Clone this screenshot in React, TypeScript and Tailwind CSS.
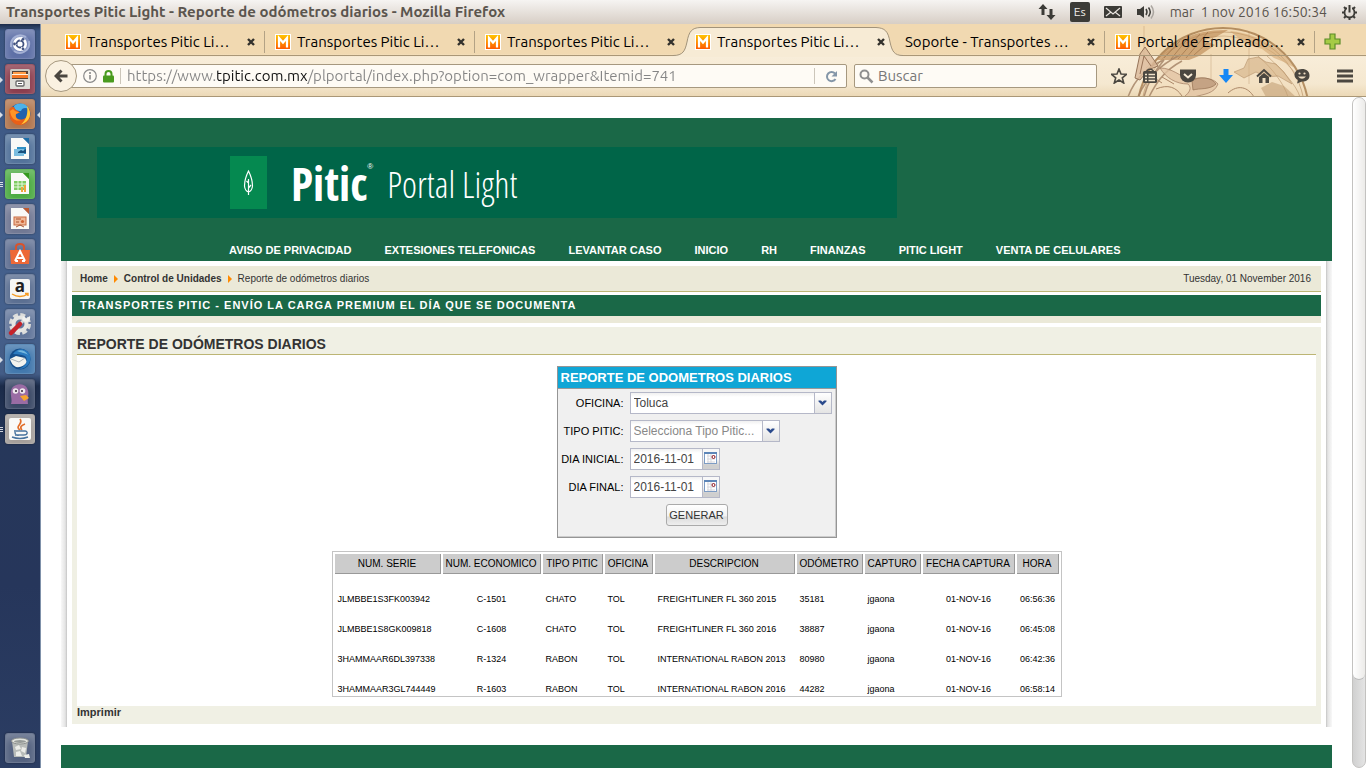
import React from "react";

const uiFont = "font-['Ubuntu','Open_Sans',sans-serif]";

function Favicon() {
  return (
    <svg width="16" height="16" viewBox="0 0 16 16" className="shrink-0" aria-hidden="true">
      <defs>
        <linearGradient id="fav" x1="0" y1="0" x2="0" y2="1">
          <stop offset="0" stopColor="#ffc400" />
          <stop offset="1" stopColor="#ff5a00" />
        </linearGradient>
      </defs>
      <rect width="16" height="16" fill="#fff" />
      <rect x="1" y="1" width="14" height="14" fill="url(#fav)" />
      <path d="M4 13.500V4L8 8.500L12 4V13.500" fill="none" stroke="#fff" strokeWidth="2.200" />
    </svg>
  );
}

function CloseMark() {
  return (
    <svg width="8" height="8" viewBox="0 0 8 8" aria-hidden="true">
      <path d="M1 1L7 7M7 1L1 7" stroke="#33312c" strokeWidth="2.4" />
    </svg>
  );
}

type TabInfo = { title: string; icon: boolean; active?: boolean; divider?: boolean };

const tabs: TabInfo[] = [
  { title: "Transportes Pitic Li…", icon: true, divider: true },
  { title: "Transportes Pitic Li…", icon: true, divider: true },
  { title: "Transportes Pitic Li…", icon: true },
  { title: "Transportes Pitic Li…", icon: true, active: true },
  { title: "Soporte - Transportes …", icon: false, divider: true },
  { title: "Portal de Empleado…", icon: true, divider: true },
];

function Tab({ tab }: { tab: TabInfo }) {
  return (
    <div className="relative flex h-8 w-[210px] items-center pb-1 pl-[10px] pr-[10px] pt-2">
      {tab.active && (
        <svg className="absolute -left-3 top-0 z-0" width="230" height="33" viewBox="0 0 230 33" aria-hidden="true">
          <path
            d="M0 33V31.500C10 31.500 12 27 14 18C16 7 19 4 27 3.500H203C212 4 215 7 217 18C219 27 221 31.500 230 31.500V33Z"
            fill="#f7ebd5"
          />
          <path
            d="M0 31.500C10 31.500 12 27 14 18C16 7 19 4 27 3.500H203C212 4 215 7 217 18C219 27 221 31.500 230 31.500"
            fill="none"
            stroke="#a2937a"
          />
        </svg>
      )}
      <button type="button" className="relative z-10 flex min-w-0 flex-1 items-center gap-[6px] text-left">
        {tab.icon && <Favicon />}
        <span className="whitespace-nowrap text-[15px] leading-5 text-black">{tab.title}</span>
      </button>
      <button type="button" aria-label="Cerrar pestaña" className="relative z-10 flex h-4 w-2 items-center">
        <CloseMark />
      </button>
      {tab.divider && <span className="absolute right-0 top-[7px] h-[22px] w-px bg-[#b3a285]" />}
    </div>
  );
}

function PersonaArt() {
  return (
    <svg className="pointer-events-none absolute right-[40px] top-0" width="210" height="73" viewBox="0 0 210 73" aria-hidden="true">
      <circle cx="107" cy="90" r="86" fill="#f1dab6" fillOpacity=".5" />
      <g fill="none" stroke="#a57a4b">
        <circle cx="107" cy="90" r="86" strokeWidth="2" strokeOpacity=".8" />
        <circle cx="107" cy="90" r="82" strokeOpacity=".5" />
        <path d="M28 2V34M133 8V60M95 30V60" strokeOpacity=".3" />
        <path d="M30 44C52 24 76 13 108 12C138 14 162 28 180 50" strokeOpacity=".35" />
        <path d="M150 31C165 45 180 60 184 73M142 32C157 45 168 60 172 73" strokeOpacity=".45" />
      </g>
      <path d="M41 36C56 16 82 5 112 6L100 13L88 16L99 21L83 32L73 36L60 36Z" fill="#bd8b56" fillOpacity=".65" />
      <g stroke="#8b6037" strokeOpacity=".5">
        <path d="M48 34L64 17M55 35L73 13M62 35L84 10M70 34L92 8M78 31L97 14" />
      </g>
      <path d="M114 7C144 10 166 25 179 44L168 38L158 34L146 25L130 20Z" fill="#ce9d66" fillOpacity=".5" />
      <path d="M118 48L128 44L132 35L142 33L150 38L160 40L168 48L176 60L162 52L150 53L140 48L128 54Z" fill="#d0ac7e" fillOpacity=".55" stroke="#ad8760" strokeOpacity=".5" />
      <path d="M145 64L156 58L168 62L180 73H150Z" fill="#c3a077" fillOpacity=".6" />
      <path d="M12 73C18 57 30 43 48 36C37 49 31 60 28 73M22 73C29 56 42 42 64 31M33 73C39 61 47 47 66 37" fill="none" stroke="#a18063" strokeOpacity=".8" strokeWidth="1.500" />
      <path d="M19 54L24 30L29 23L38 36L42 42L32 46L24 56Z" fill="#dbb99a" fillOpacity=".8" stroke="#957358" />
      <path d="M24 50L28 32L35 42" fill="none" stroke="#997358" />
      <path d="M44 44C56 44 64 52 74 56C84 52 98 54 102 60C98 70 88 70 78 73H68C74 68 76 64 72 60C60 60 50 54 44 44Z" fill="#e2c4a4" fillOpacity=".8" stroke="#9f7a5f" strokeOpacity=".7" />
      <path d="M76 57C82 52 96 53 100 60C94 66 84 64 77 66Z" fill="#c5a384" stroke="#947052" strokeOpacity=".7" />
      <path d="M40 65C52 60 60 63 66 72M46 53L58 60M34 51L46 59M112 69C122 60 132 63 138 73" fill="none" stroke="#ab8768" />
    </svg>
  );
}

function LauncherTile({ label, tone, windows = 0, focused, children }: {
  label: string;
  tone: string;
  windows?: number;
  focused?: boolean;
  children: React.ReactNode;
}) {
  return (
    <button
      type="button"
      aria-label={label}
      className={`relative flex h-[30px] w-[30px] items-center justify-center rounded-[3px] border border-white/15 shadow-[0_0_2px_rgba(0,0,0,0.45),inset_0_5px_8px_rgba(255,255,255,0.25)] ${tone}`}
    >
      <svg width="24" height="24" viewBox="0 0 24 24" className="overflow-visible" aria-hidden="true">{children}</svg>
      {windows === 1 && <span className="absolute -left-1.5 top-3 h-0 w-0 border-y-[3px] border-l-[3px] border-y-transparent border-l-white/80" />}
      {windows > 1 && (
        <span className="absolute -left-1.5 top-3 flex flex-col gap-px">
          {Array.from({ length: windows }, (_, i) => <span key={i} className="h-px w-[3px] bg-white/80" />)}
        </span>
      )}
      {focused && <span className="absolute -right-1.5 top-3 h-0 w-0 border-y-[3px] border-r-[3px] border-y-transparent border-r-white/80" />}
    </button>
  );
}

function DocShape({ accent, children }: { accent: string; children: React.ReactNode }) {
  return (
    <>
      <path d="M3 1H15L21 7V22H3Z" fill="#f9f9f7" />
      <path d="M15 1H21V7Z" fill={accent} />
      {children}
    </>
  );
}

function Launcher() {
  return (
    <nav
      aria-label="Lanzador"
      className="flex w-[41px] shrink-0 flex-col items-start gap-[5px] border-r border-[#7f91aa] bg-[linear-gradient(180deg,#1d2c49_0px,#3c5682_7px,#45618d_280px,#435c86_350px,#1b2b49_362px,#26375a_420px,#26365b_560px,#2b3d63_744px)] px-[5px] py-[5px]"
    >
      <LauncherTile label="Inicio" tone="bg-[#5d6fa6]">
        <circle cx="12" cy="12" r="10" fill="#9aa8cf" fillOpacity=".5" />
        <path d="M3 15C2 6 10 1 18 5M21 9C23 18 13 24 6 19" fill="none" stroke="#c0cae5" strokeWidth="2" strokeOpacity=".6" />
        <circle cx="12" cy="12" r="7" fill="#fff" />
        <circle cx="12" cy="12" r="3.500" fill="none" stroke="#41527f" strokeWidth="1.800" />
        <path d="M12 8.500L14 5M8.500 12.500H5M13.500 15L15 18.500" stroke="#fff" strokeWidth="1.200" />
        <circle cx="6.500" cy="12" r="1.400" fill="#41527f" /><circle cx="15" cy="7.300" r="1.400" fill="#41527f" /><circle cx="15" cy="16.800" r="1.400" fill="#41527f" />
      </LauncherTile>
      <LauncherTile label="Archivos" tone="bg-[#8b3c4d]" windows={1}>
        <rect x="2" y="2" width="20" height="20" rx="1.500" fill="#c9c8c2" />
        <rect x="4" y="4" width="16" height="8" fill="#5a4436" />
        <path d="M5 5H18V7H5Z" fill="#ff9c48" /><path d="M4 8H20V11H4Z" fill="#f47725" />
        <path d="M4 7.500H20" stroke="#fff3df" />
        <rect x="2" y="12" width="20" height="10" rx="1" fill="#dddcd6" />
        <rect x="8" y="14" width="8" height="5" rx="1" fill="#fff" stroke="#666" strokeWidth="1.300" /><path d="M10 16.500H14" stroke="#555" />
      </LauncherTile>
      <LauncherTile label="Firefox" tone="bg-[#b0744c]" windows={1} focused>
        <circle cx="12" cy="12" r="10.500" fill="#1f62ae" />
        <path d="M6 4C11 0 18 1 21 7C17 5 14 6 13 9C9 9 6 8 6 4Z" fill="#4db2ea" />
        <path d="M1.500 7C0 17 5 23 12 23C21 23 25 13 20 5C21 12 19 17 14 17.500C9 18 6 14 8 12L12 10.500C9 8 7 8 6 5C4 5 2.500 5.500 1.500 7Z" fill="#ea5f17" />
        <path d="M19 4C25 11 22 20 13 22.500C19 17 20 11 19 4Z" fill="#ffc738" />
        <path d="M2 9L5 7L7 9L11 10.500L8 12C7 15 9 18 13 18C8 20 3 17 2 9Z" fill="#ff9426" />
      </LauncherTile>
      <LauncherTile label="Writer" tone="bg-[#52729a]">
        <DocShape accent="#1c6da7">
          <rect x="9" y="10" width="9" height="7" fill="#2e8fc4" /><rect x="6" y="12" width="10" height="7" fill="#7bbde0" />
          <path d="M10 15L13 13L15 14L18 12V16H10Z" fill="#174f7c" />
        </DocShape>
      </LauncherTile>
      <LauncherTile label="Calc" tone="bg-[#4cab42]" windows={3}>
        <DocShape accent="#35991e">
          <rect x="6" y="9" width="12" height="9" fill="#7dcc61" /><path d="M6 12H18M6 15H18M10 9V18M14 9V18" stroke="#e7f7df" />
          <path d="M13 20V15H15V20M16 20V13H18V20" fill="#f1a63b" />
        </DocShape>
      </LauncherTile>
      <LauncherTile label="Impress" tone="bg-[#707793]">
        <DocShape accent="#bd5a31">
          <rect x="6" y="10" width="12" height="8" fill="#efb99a" stroke="#c96a41" /><path d="M8 12H13M8 15H11M8 20L12 18L16 20" stroke="#a95531" fill="none" />
          <circle cx="14.500" cy="14.500" r="1.600" fill="#ce6436" />
        </DocShape>
      </LauncherTile>
      <LauncherTile label="Software" tone="bg-[#5e6e91]">
        <path d="M8 9V5Q8 2 12 2T16 5V9" fill="none" stroke="#d9532c" strokeWidth="2" />
        <path d="M2 8H22L21 22H3Z" fill="#ed6837" />
        <path d="M7 19L12 9L17 19M9 16H15M7 19H10M14 19H17" fill="none" stroke="#fff" strokeWidth="2" />
      </LauncherTile>
      <LauncherTile label="Amazon" tone="bg-[#5a6e91]">
        <rect x="2" y="2" width="20" height="20" rx="2" fill="#f6f6f4" />
        <text x="12" y="15" textAnchor="middle" fontSize="17" fontWeight="700" fill="#202020" className="font-['Open_Sans',sans-serif]">a</text>
        <path d="M4 17Q12 22 20 17M17 16.500H20V19" stroke="#f59a20" strokeWidth="1.400" fill="none" />
      </LauncherTile>
      <LauncherTile label="Configuración" tone="bg-[#61759a]">
        <circle cx="12" cy="12" r="8.500" fill="none" stroke="#dddddb" strokeWidth="5" strokeDasharray="4.500 2.180" />
        <circle cx="12" cy="12" r="6.500" fill="none" stroke="#e5e5e2" strokeWidth="4" />
        <path d="M10 14L17 7" stroke="#d5d7d8" strokeWidth="3" /><path d="M3 21L12 12" stroke="#c6232a" strokeWidth="4.500" strokeLinecap="round" />
        <path d="M16 4L18 7L22 4C23 9 19 11 15 9C14 7 14 5 16 4Z" fill="#f1f1ef" />
      </LauncherTile>
      <LauncherTile label="Thunderbird" tone="bg-[#4177ac]" windows={1}>
        <circle cx="12" cy="12" r="10.500" fill="#164e8a" />
        <path d="M2 12L8 9L17 11L19 15Q15 21 8 20Q3 17 2 12Z" fill="#f2f3ee" /><path d="M3 12L11 15L17 11" stroke="#a9b3ba" fill="none" />
        <path d="M5 7C9 0 19 1 22 8C24 16 18 22 11 22C18 19 20 14 18 10C15 7 10 8 5 7Z" fill="#2a7abf" />
        <path d="M9 4C13 2 18 4 20 8C16 5 13 6 9 4Z" fill="#75b8df" />
      </LauncherTile>
      <LauncherTile label="Pidgin" tone="bg-[#394765]">
        <path d="M3 22C5 18 1 11 4 6C8 1 16 1 19 6C22 11 19 16 20 22Z" fill="#9a6ca4" />
        <circle cx="7.500" cy="9" r="2.800" fill="#eee7ed" /><circle cx="14.500" cy="9" r="2.800" fill="#eee7ed" />
        <circle cx="8" cy="9" r="1" fill="#35273b" /><circle cx="14" cy="9" r="1" fill="#35273b" />
        <path d="M12 14L18 13L21 16L16 19Z" fill="#f6a52e" />
      </LauncherTile>
      <LauncherTile label="Java" tone="bg-[#a49e9a]" windows={3}>
        <rect x="1" y="1" width="22" height="22" rx="2" fill="#f9f9f7" />
        <path d="M12 13C6 9 16 7 12 2M14 13C11 10 14 8 17 7" fill="none" stroke="#e16d28" strokeWidth="1.700" />
        <path d="M6 14H17C20 14 20 18 16 18H7M7 15Q7 19 11 18M4 20Q12 23 20 20" fill="none" stroke="#47739e" strokeWidth="1.400" />
      </LauncherTile>
      <div className="flex-1" />
      <LauncherTile label="Papelera" tone="bg-[#53617f]">
        <path d="M4 5L6 21H18L20 5Z" fill="#b8bcb9" /><ellipse cx="12" cy="5" rx="8.500" ry="3" fill="#e3e5df" stroke="#8d918f" />
        <ellipse cx="12" cy="5.500" rx="6" ry="1.500" fill="#969b98" />
        <path d="M7 11L11 9L13 13L8 14ZM14 11L18 12L17 17L13 15ZM8 16L12 15L14 20H8ZM16 19L21 18L22 22H17Z" fill="#ecede9" />
      </LauncherTile>
    </nav>
  );
}

function SystemBar() {
  return (
    <header className="flex h-6 shrink-0 items-center justify-between bg-[linear-gradient(180deg,#f6f4f2,#d7cec5)] pl-[6px] pr-2 text-[#5b554e]">
      <span className="whitespace-nowrap text-[15px] font-bold leading-5">
        Transportes Pitic Light - Reporte de odómetros diarios - Mozilla Firefox
      </span>
      <div className="flex items-center gap-[14px] text-[#3c3b37]">
        <svg width="18" height="18" viewBox="0 0 18 18" aria-label="Red">
          <path d="M5 1L9.500 6H6.500V12H3.500V6H.5ZM13 17L8.500 12H11.500V6H14.500V12H17.500Z" fill="currentColor" />
        </svg>
        <span className="flex h-5 w-5 items-center justify-center rounded-[2px] bg-[#3c3b37] text-xs text-[#efebe7]">Es</span>
        <svg width="18" height="12" viewBox="0 0 18 12" aria-label="Correo">
          <rect width="18" height="12" rx="1" fill="currentColor" />
          <path d="M2 2L9 8L16 2M2 10L7 6M16 10L11 6" fill="none" stroke="#eae5e0" strokeWidth="1.200" />
        </svg>
        <svg width="20" height="16" viewBox="0 0 20 16" aria-label="Volumen">
          <path d="M1 5H4L8 2V14L4 11H1Z" fill="currentColor" />
          <path d="M10 5Q12 8 10 11M12.500 3.500Q16 8 12.500 12.500" fill="none" stroke="currentColor" strokeWidth="1.500" />
          <path d="M15 1.500Q20 8 15 14.500" fill="none" stroke="#aaa59f" strokeWidth="1.500" />
        </svg>
        <time className="whitespace-pre text-sm leading-5 text-[#5b554e]">mar  1 nov 2016 16:50:34</time>
        <svg width="17" height="17" viewBox="0 0 17 17" aria-label="Sesión">
          <circle cx="8.500" cy="8.500" r="5" fill="none" stroke="currentColor" strokeWidth="1.800" />
          <path d="M1 8.500H3.500M13.500 8.500H16M3 3L5 5M12 12L14 14M3 14L5 12M12 5L14 3M8.500 13.500V16" stroke="currentColor" strokeWidth="2" />
          <path d="M8.500 1V7" stroke="#e8e3dd" strokeWidth="5" /><path d="M8.500 1V8.500" stroke="currentColor" strokeWidth="2" />
        </svg>
      </div>
    </header>
  );
}

function ToolbarIcons() {
  const c = "#4b4740";
  return (
    <div className="ml-[14px] flex items-center gap-[22px]">
      <button type="button" aria-label="Marcador" className="-mr-[7px]">
        <svg width="16" height="16" viewBox="0 0 16 16"><path d="M8 1L10 6L15.500 6.300L11.300 9.800L12.700 15L8 12L3.300 15L4.700 9.800L.5 6.300L6 6Z" fill="none" stroke={c} strokeWidth="1.600" /></svg>
      </button>
      <button type="button" aria-label="Mis marcadores">
        <svg width="16" height="16" viewBox="0 0 16 16">
          <path d="M5 4V2.500Q8 0 11 2.500V4" fill="none" stroke={c} strokeWidth="1.600" />
          <rect x="1" y="3" width="14" height="12" rx="1.500" fill={c} />
          <path d="M3 6.500H5M6.500 6.500H13M3 9.500H5M6.500 9.500H13M3 12.500H5M6.500 12.500H13" stroke="#f3e4ca" strokeWidth="1.500" />
        </svg>
      </button>
      <button type="button" aria-label="Pocket">
        <svg width="16" height="16" viewBox="0 0 16 16"><path d="M0 1.500H16V7A8 7.500 0 0 1 0 7Z" fill={c} /><path d="M4 6L8 9.500L12 6" fill="none" stroke="#f7ebd5" strokeWidth="2" /></svg>
      </button>
      <button type="button" aria-label="Descargas">
        <svg width="16" height="16" viewBox="0 0 16 16"><path d="M5.500 1H10.500V7H15L8 15L1 7H5.500Z" fill="#1687f5" /></svg>
      </button>
      <button type="button" aria-label="Inicio">
        <svg width="16" height="16" viewBox="0 0 16 16"><path d="M1 8.500L8 2L15 8.500" fill="none" stroke={c} strokeWidth="2" /><path d="M3 9L8 5L13 9V15H9.500V10H6.500V15H3Z" fill={c} /></svg>
      </button>
      <button type="button" aria-label="Hello">
        <svg width="16" height="16" viewBox="0 0 16 16"><path d="M8 1C12.500 1 15.500 3.500 15.500 7.500S12.500 13.500 8 13.500L3 15.500L4 12C-2 9 0 1 8 1Z" fill={c} /><circle cx="5.500" cy="5.500" r="1.100" fill="#f1dfc3" /><circle cx="10.500" cy="5.500" r="1.100" fill="#f1dfc3" /><path d="M4 8.500H12Q8 13 4 8.500Z" fill="#f1dfc3" /></svg>
      </button>
      <button type="button" aria-label="Menú" className="ml-[5px]">
        <svg width="16" height="16" viewBox="0 0 16 16"><path d="M0 3H16M0 8H16M0 13H16" stroke={c} strokeWidth="2.800" /></svg>
      </button>
    </div>
  );
}

function BrowserChrome() {
  return (
    <div className="relative shrink-0 overflow-hidden border-b border-[#aa9777] bg-[linear-gradient(180deg,#f1d9b1_0px,#f1d9b1_30px,#f8edd9_33px,#f5e8d0_60px,#ecd9b7_72px)]">
      <PersonaArt />
      <div className="relative flex h-8 border-b border-[#aa9777] pl-[14px]">
        {tabs.map((t, i) => <Tab key={i} tab={t} />)}
        <button type="button" aria-label="Nueva pestaña" className="ml-[9px] mt-1">
          <svg width="17" height="17" viewBox="0 0 17 17"><path d="M6 1H11V6H16V11H11V16H6V11H1V6H6Z" fill="#a5cb45" stroke="#5c8c28" strokeWidth="1.200" /></svg>
        </button>
      </div>
      <div className="relative flex h-10 items-center pl-1 pr-[13px]">
        <button type="button" aria-label="Atrás" className="relative z-10 flex h-8 w-8 shrink-0 items-center justify-center rounded-full border border-[#a6987f] bg-[#faf1e1]">
          <svg width="14" height="14" viewBox="0 0 14 14"><path d="M13.500 7H3M7.500 1.500L2 7L7.500 12.500" fill="none" stroke="#4a4640" strokeWidth="3" /></svg>
        </button>
        <div className="-ml-2 flex h-6 flex-1 items-center rounded-r-[2px] border border-[#a6987f] bg-[#fefbf5] pl-[13px] pr-2">
          <svg width="14" height="14" viewBox="0 0 14 14" aria-hidden="true"><circle cx="7" cy="7" r="6.300" fill="none" stroke="#8a8a8a" strokeWidth="1.200" /><path d="M7 6V10.500M7 3V5" stroke="#8a8a8a" strokeWidth="1.600" /></svg>
          <svg className="ml-1.5" width="11" height="13" viewBox="0 0 11 13" aria-hidden="true"><path d="M2.500 6V4A3 3 0 0 1 8.500 4V6" fill="none" stroke="#4a9b1f" strokeWidth="2" /><rect y="5.500" width="11" height="7" rx="1" fill="#4a9b1f" /></svg>
          <span className="ml-[6px] h-4 w-px bg-[#ccc6ba]" />
          <input
            aria-label="Dirección"
            defaultValue="https://www.tpitic.com.mx/plportal/index.php?option=com_wrapper&Itemid=741"
            className="ml-[6px] min-w-0 flex-1 bg-[linear-gradient(90deg,#858585_89px,#111_89px,#111_181px,#858585_181px)] bg-clip-text text-[15px] leading-5 text-transparent outline-none"
          />
          <span className="mr-[10px] h-4 w-px bg-[#ccc6ba]" />
          <button type="button" aria-label="Recargar">
            <svg width="13" height="13" viewBox="0 0 13 13"><path d="M10.500 9A4.600 4.600 0 1 1 10 3.500" fill="none" stroke="#8496a8" strokeWidth="2" /><path d="M12 1V6.500H6.500Z" fill="#8496a8" /></svg>
          </button>
        </div>
        <div className="ml-[7px] flex h-6 w-[243px] items-center rounded-[2px] border border-[#a6987f] bg-[#fefbf5] pl-1">
          <svg width="15" height="15" viewBox="0 0 15 15" className="shrink-0" aria-hidden="true"><circle cx="5.500" cy="5.500" r="4" fill="none" stroke="#8f8f8f" strokeWidth="2" /><path d="M8.500 8.500L13.500 13.500" stroke="#8f8f8f" strokeWidth="2.500" /></svg>
          <input aria-label="Buscar" placeholder="Buscar" className="ml-1 w-full bg-transparent text-[15px] leading-5 outline-none placeholder:text-[#777]" />
        </div>
        <ToolbarIcons />
      </div>
    </div>
  );
}

const menu = ["AVISO DE PRIVACIDAD", "EXTESIONES TELEFONICAS", "LEVANTAR CASO", "INICIO", "RH", "FINANZAS", "PITIC LIGHT", "VENTA DE CELULARES"];

function PortalHeader() {
  return (
    <header className="bg-[#1a6847] pt-[29px] text-white">
      <div className="ml-9 flex h-[71px] w-[800px] items-center bg-[#006548] pl-[133px]">
        <svg width="37" height="53" viewBox="0 0 37 53" aria-hidden="true">
          <rect width="37" height="53" fill="#058950" />
          <path d="M18.500 15C16 20 14.500 25 14.500 30Q15 35 18.500 36Q22 35 22.500 30C22.500 25 21 20 18.500 15ZM18.500 23V39M18.500 27L16.500 25M18.500 32L21 29" fill="none" stroke="#fff" strokeWidth="1.200" />
        </svg>
        <span className="ml-6 font-['Open_Sans_Condensed','Liberation_Sans_Narrow','Open_Sans',sans-serif] text-[46px] font-bold leading-[52px]">Pitic</span>
        <sup className="-top-4 text-[8px] leading-none">®</sup>
        <span className="ml-[14px] mt-1 font-['Open_Sans_Condensed_Light','Open_Sans_Light','Liberation_Sans_Narrow','Open_Sans',sans-serif] text-4xl font-light leading-10">Portal Light</span>
      </div>
      <nav className="flex gap-[33px] pb-[3px] pl-[168px] pt-6 text-[11px] font-bold leading-4">
        {menu.map((m) => <a key={m} href="#" className="whitespace-nowrap">{m}</a>)}
      </nav>
    </header>
  );
}

function Crumb() {
  return (
    <svg width="4" height="8" viewBox="0 0 4 8" className="mx-[6px]" aria-hidden="true"><path d="M0 0L4 4L0 8Z" fill="#ff8a00" /></svg>
  );
}

const control = "block h-[22px] border border-[#b5b8c8] bg-[linear-gradient(180deg,#f0f0f0,#fff_4px)] text-xs text-[#444]";

function Chooser({ id, value, width, muted }: { id: string; value: string; width: string; muted?: boolean }) {
  return (
    <div className={`relative ${width}`}>
      <select id={id} className={`${control} w-full appearance-none pl-[3px] outline-none ${muted ? "text-[#888]" : ""}`}>
        <option>{value}</option>
      </select>
      <span className="pointer-events-none absolute inset-y-0 right-0 flex w-[18px] justify-center border border-[#b5b8c8] bg-[linear-gradient(180deg,#fff,#e4e4e4)] pt-[7px]">
        <svg width="9" height="6" viewBox="0 0 9 6" aria-hidden="true"><path d="M.5 .5H3L4.500 2L6 .5H8.500V1.500L4.500 5.500L.5 1.500Z" fill="#2a4a8c" /></svg>
      </span>
    </div>
  );
}

function DateField({ id }: { id: string }) {
  return (
    <div className="flex">
      <input id={id} defaultValue="2016-11-01" className={`${control} w-[73px] pl-[3px] outline-none`} />
      <button type="button" aria-label="Abrir calendario" className="flex h-[22px] w-[17px] justify-center border border-l-0 border-[#b5b8c8] bg-[linear-gradient(180deg,#f8f8f8_10px,#cfcfcf_16px)] pt-[3px]">
        <svg width="13" height="12" viewBox="0 0 13 12"><rect x=".5" y=".5" width="12" height="11" fill="#fff" stroke="#7d9cc4" /><path d="M0 1H13" stroke="#5e86b8" strokeWidth="2" /><path d="M3 4H11M3 7H11M3 10H11M4 2V11M7 2V11" stroke="#d7d7dd" /><circle cx="9.500" cy="5" r="1.500" fill="#fff" stroke="#8e1521" /></svg>
      </button>
    </div>
  );
}

function ReportForm() {
  const label = "whitespace-nowrap text-right text-[11px] leading-[22px] text-black";
  return (
    <form onSubmit={(e) => e.preventDefault()} className="w-[280px] border border-[#959595] bg-[#f0f0f0] pb-[11px] shadow-[inset_-1px_-1px_0_#ccc]">
      <h2 className="h-[22px] border-b border-[#999] bg-[#0fa6d6] pl-[3px] text-[13px] font-bold leading-[21px] text-white">REPORTE DE ODOMETROS DIARIOS</h2>
      <div className="grid grid-cols-[66px_1fr] gap-x-[6px] gap-y-[6px] pt-[3px]">
        <label htmlFor="oficina" className={label}>OFICINA:</label>
        <Chooser id="oficina" value="Toluca" width="w-[202px]" />
        <label htmlFor="tipo" className={label}>TIPO PITIC:</label>
        <Chooser id="tipo" value="Selecciona Tipo Pitic..." width="w-[150px]" muted />
        <label htmlFor="inicial" className={label}>DIA INICIAL:</label>
        <DateField id="inicial" />
        <label htmlFor="final" className={label}>DIA FINAL:</label>
        <DateField id="final" />
        <button type="submit" className="col-span-2 h-[22px] w-[62px] justify-self-center rounded-[3px] border border-[#aaa] bg-[linear-gradient(180deg,#fff_0%,#f2f2f2_55%,#dcdcdc_60%,#eee_100%)] text-[11px] leading-5 text-[#333]">GENERAR</button>
      </div>
    </form>
  );
}

const columns = [
  { name: "NUM. SERIE", width: "w-[106px]", centered: false },
  { name: "NUM. ECONOMICO", width: "w-[98px]", centered: true },
  { name: "TIPO PITIC", width: "w-[60px]", centered: false },
  { name: "OFICINA", width: "w-[48px]", centered: false },
  { name: "DESCRIPCION", width: "w-[140px]", centered: false },
  { name: "ODÓMETRO", width: "w-[66px]", centered: false },
  { name: "CAPTURO", width: "w-[56px]", centered: false },
  { name: "FECHA CAPTURA", width: "w-[92px]", centered: true },
  { name: "HORA", width: "w-[42px]", centered: true },
];

const rows = [
  ["JLMBBE1S3FK003942", "C-1501", "CHATO", "TOL", "FREIGHTLINER FL 360 2015", "35181", "jgaona", "01-NOV-16", "06:56:36"],
  ["JLMBBE1S8GK009818", "C-1608", "CHATO", "TOL", "FREIGHTLINER FL 360 2016", "38887", "jgaona", "01-NOV-16", "06:45:08"],
  ["3HAMMAAR6DL397338", "R-1324", "RABON", "TOL", "INTERNATIONAL RABON 2013", "80980", "jgaona", "01-NOV-16", "06:42:36"],
  ["3HAMMAAR3GL744449", "R-1603", "RABON", "TOL", "INTERNATIONAL RABON 2016", "44282", "jgaona", "01-NOV-16", "06:58:14"],
];

function ReportTable() {
  return (
    <table className="mt-[13px] w-[730px] table-fixed border-separate border-spacing-[2px] border border-[#c4c4c4] text-black">
      <thead>
        <tr>
          {columns.map((c) => (
            <th key={c.name} className={`${c.width} h-5 whitespace-nowrap border-b border-r border-[#999] bg-[#ccc] p-0 text-center text-[10px] font-normal leading-[19px]`}>{c.name}</th>
          ))}
        </tr>
      </thead>
      <tbody>
        {rows.map((r) => (
          <tr key={r[0]}>
            {r.map((v, i) => (
              <td key={i} className={`h-7 whitespace-nowrap p-0 align-bottom text-[9px] leading-[10px] ${columns[i].centered ? "text-center" : "pl-[3px]"}`}>{v}</td>
            ))}
          </tr>
        ))}
      </tbody>
    </table>
  );
}

function PortalPage() {
  return (
    <main className="flex min-w-0 flex-1 flex-col bg-white px-5 pt-[21px] font-['Liberation_Sans',Arial,sans-serif] text-[#333]">
      <PortalHeader />
      <div className="flex">
        <div className="w-[6px] bg-[linear-gradient(90deg,#f8f8f8,#e4e4e4_70%,#c4c4c4)]" />
        <div className="min-w-0 flex-1 px-[5px] pb-[3px] pt-[5px]">
          <div className="flex h-[26px] items-center justify-between border-b border-[#bcb574] bg-[#ebe9d8] pl-2 pr-[10px] text-[10px] leading-4">
            <div className="flex items-center">
              <a href="#" className="font-bold">Home</a>
              <Crumb />
              <a href="#" className="font-bold">Control de Unidades</a>
              <Crumb />
              <span>Reporte de odómetros diarios</span>
            </div>
            <time>Tuesday, 01 November 2016</time>
          </div>
          <div className="mt-[3px] h-[28px] border-b-[7px] border-[#ebe9d8] bg-[#1a6847] pl-2 text-[11px] font-bold leading-[21px] tracking-[1px] text-white">
            TRANSPORTES PITIC - ENVÍO LA CARGA PREMIUM EL DÍA QUE SE DOCUMENTA
          </div>
          <section className="mt-1 bg-[#f0f0e4] px-[5px]">
            <h1 className="h-7 border-b border-[#bcb574] pt-[7px] text-sm font-bold leading-5">REPORTE DE ODÓMETROS DIARIOS</h1>
            <div className="flex flex-col items-center bg-white pb-[9px] pt-[11px]">
              <ReportForm />
              <ReportTable />
            </div>
            <div className="h-[18px] text-[11px] font-bold leading-3">
              <a href="#">Imprimir</a>
            </div>
          </section>
        </div>
        <div className="w-[6px] bg-[linear-gradient(90deg,#c4c4c4,#e4e4e4_30%,#f8f8f8)]" />
      </div>
      <footer className="mt-[18px] flex-1 bg-[#1a6847]" />
    </main>
  );
}

export default function App() {
  return (
    <div className={`flex h-screen flex-col overflow-hidden ${uiFont}`}>
      <SystemBar />
      <div className="flex min-h-0 flex-1">
        <Launcher />
        <div className="flex min-w-0 flex-1 flex-col">
          <BrowserChrome />
          <div className="flex min-h-0 flex-1">
            <PortalPage />
            <div className="flex w-[14px] shrink-0 flex-col rounded-full border border-[#c3c2c0] bg-[linear-gradient(90deg,#d0d0d0,#e4e4e4)]">
              <div className="h-[87%] rounded-full border-b border-[#bbb] bg-[linear-gradient(90deg,#fff,#ecebe9)]" />
            </div>
          </div>
        </div>
      </div>
    </div>
  );
}
